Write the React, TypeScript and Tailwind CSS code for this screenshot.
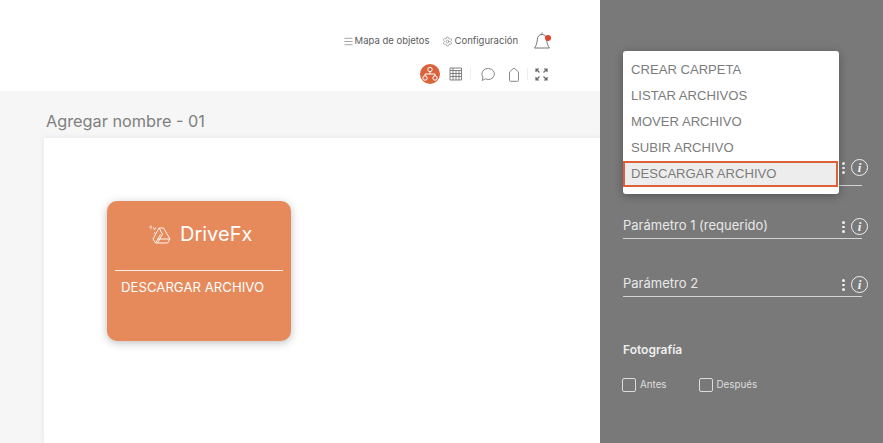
import { Menu, Settings } from "lucide-react";

const menuItems = ["CREAR CARPETA", "LISTAR ARCHIVOS", "MOVER ARCHIVO", "SUBIR ARCHIVO"];

const DriveIcon = () => (
  <svg width="24" height="20" viewBox="0 0 24 20" fill="none" stroke="#fff" strokeWidth="1" strokeLinejoin="round" className="opacity-90">
    <path d="M11 4h4.500l6.500 11-2.500 4H7.500L5 15z" />
    <path d="M11 4l3.500 6-5 9M9.500 15H22M7.500 19l5-8.500" />
    <path d="M1 3.500c1-1 2-1 3-.5M3 1.500v4M5 3l1.500 3 1.500-3M7 8l-1 2" strokeWidth="0.7" />
  </svg>
);

const FlowIcon = () => (
  <svg width="16" height="16" viewBox="0 0 16 16" fill="none" stroke="#fff" strokeWidth="1">
    <circle cx="8" cy="3.500" r="2.200" />
    <circle cx="3" cy="12" r="2.200" />
    <circle cx="13" cy="12" r="2.200" />
    <path d="M8 5.700V8M3 9.800V8h10v1.800" />
  </svg>
);

const TableIcon = () => (
  <svg width="14" height="14" viewBox="0 0 14 14" fill="none" stroke="#777" strokeWidth="0.9">
    <path d="M1 1h11.500v12H1zM1 3.500h11.500M1 6.500h11.500M1 9.500h11.500M4 1v12M7 3.500V13M10 3.500V13" />
  </svg>
);

const ChatIcon = () => (
  <svg width="16" height="15" viewBox="0 0 16 15" fill="none" stroke="#888" strokeWidth="1">
    <path d="M8.500 1.500a6 5.500 0 1 1-3 10.300L2.300 13.500l.6-3.400A6 5.500 0 0 1 8.500 1.500z" />
  </svg>
);

const TagIcon = () => (
  <svg width="12" height="15" viewBox="0 0 12 15" fill="none" stroke="#888" strokeWidth="1">
    <path d="M1.500 5L6 1l4.500 4v8.500a.8.8 0 0 1-.8.8H2.300a.8.8 0 0 1-.8-.8z" />
  </svg>
);

const ExpandIcon = () => (
  <svg width="13" height="13" viewBox="0 0 13 13" fill="none" stroke="#666" strokeWidth="1.200">
    <path d="M1 4V1h3M1 1l3.500 3.500M9 1h3v3M12 1L8.500 4.500M1 9v3h3M1 12l3.500-3.500M12 9v3H9M12 12L8.500 8.500" />
  </svg>
);

const BellIcon = () => (
  <div className="relative h-[18px] w-[18px]">
    <svg width="18" height="18" viewBox="0 0 18 18" fill="none" stroke="#777" strokeWidth="1" strokeLinejoin="round">
      <path d="M9 .5V2.500M9 2.500c-3 0-4.500 2-4.700 5.300-.2 3.200-1 6-2.800 8.200h15c-1.800-2.200-2.600-5-2.800-8.200-.2-3.300-1.700-5.300-4.700-5.300z" />
    </svg>
    <span className="absolute right-0 top-[3px] h-[6px] w-[6px] rounded-full bg-[#e0442f]" />
  </div>
);

const InfoIcon = () => (
  <div className="flex h-[17px] w-[17px] items-center justify-center rounded-full border-[1.500px] border-[#f1f1f1] font-['Liberation_Serif',serif] text-[13px] font-bold italic leading-none text-[#f1f1f1]">
    i
  </div>
);

const Dots = () => (
  <div className="flex flex-col gap-[2px]">
    <span className="h-[2.500px] w-[2.500px] rounded-full bg-[#f1f1f1]" />
    <span className="h-[2.500px] w-[2.500px] rounded-full bg-[#f1f1f1]" />
    <span className="h-[2.500px] w-[2.500px] rounded-full bg-[#f1f1f1]" />
  </div>
);

const ParamRow = ({ label, first, className }: { label: string; first?: boolean; className?: string }) => (
  <div className={`relative h-[24px] w-[239px] border-b-[1.500px] border-[#d4d4d4] ${className ?? ""}`}>
    <span className="block pt-[3px] text-[13px] leading-[14px] text-[#e8e8e8]">{label}</span>
    <div className={`absolute left-[219px] ${first ? "top-[0px]" : "top-[6px]"}`}>
      <Dots />
    </div>
    <div className={`absolute left-[228px] ${first ? "top-[-3px]" : "top-[3px]"}`}>
      <InfoIcon />
    </div>
  </div>
);

const CheckItem = ({ label }: { label: string }) => (
  <div className="flex items-center gap-[4px]">
    <span className="h-[14px] w-[14px] rounded-[2px] border border-[#dcdcdc]" />
    <span className="text-[9.800px] text-[#dedede]">{label}</span>
  </div>
);

export default function App() {
  return (
    <div className="flex h-[443px] w-[883px] overflow-hidden bg-white font-['Inter','Noto_Sans',sans-serif]">
      <div className="flex w-[600px] flex-col">
        <header className="flex h-[91px] flex-col items-end bg-white pr-[49px] pt-[31px]">
          <div className="flex h-[20px] items-center text-[9.500px] text-[#5c5c5c]">
            <Menu size={11} strokeWidth={1.2} className="mr-[1px]" />
            <span>Mapa de objetos</span>
            <Settings size={11} strokeWidth={1} className="ml-[12px] mr-[2px]" />
            <span>Configuración</span>
            <div className="ml-[15px]">
              <BellIcon />
            </div>
          </div>
          <div className="mr-[3px] mt-[12px] flex h-[22px] items-center">
            <div className="flex h-[20px] w-[20px] items-center justify-center rounded-full bg-[#d9633a]">
              <FlowIcon />
            </div>
            <div className="ml-[9px]">
              <TableIcon />
            </div>
            <div className="ml-[7px] h-[12px] w-px bg-[#eeeeee]" />
            <div className="ml-[9px]">
              <ChatIcon />
            </div>
            <div className="ml-[12px]">
              <TagIcon />
            </div>
            <div className="ml-[7px] h-[12px] w-px bg-[#eeeeee]" />
            <div className="ml-[7px]">
              <ExpandIcon />
            </div>
          </div>
        </header>
        <main className="flex flex-1 flex-col bg-[#f6f6f6] pl-[44px]">
          <h1 className="ml-[2px] mt-[19px] h-[28px] text-[16.300px] font-normal leading-[22px] text-[#808080]">
            Agregar nombre - 01
          </h1>
          <section className="flex-1 bg-white pl-[63px] pt-[63px] shadow-[0_0_6px_rgba(0,0,0,0.08)]">
            <div className="flex h-[140px] w-[184px] flex-col rounded-[10px] bg-[#e68a5b] shadow-[0_2px_8px_rgba(0,0,0,0.25)]">
              <div className="flex h-[69px] items-center pb-[3px] pl-[41px]">
                <DriveIcon />
                <span className="ml-[8px] text-[20px] leading-none text-white">DriveFx</span>
              </div>
              <div className="ml-[8px] mr-[8px] h-px bg-[#fdf0e8]" />
              <p className="ml-[14px] mt-[8px] text-[13.200px] leading-[17px] text-white">DESCARGAR ARCHIVO</p>
            </div>
          </section>
        </main>
      </div>

      <aside className="relative flex w-[283px] flex-col bg-[#797979] pl-[23px]">
        <ParamRow label="" first className="mt-[162px]" />
        <ParamRow label="Parámetro 1 (requerido)" className="mt-[29px]" />
        <ParamRow label="Parámetro 2" className="mt-[34px]" />
        <h2 className="mt-[45px] h-[16px] text-[12px] font-semibold leading-[16px] text-[#eeeeee]">Fotografía</h2>
        <div className="-ml-[1px] mt-[20px] flex gap-[32px]">
          <CheckItem label="Antes" />
          <CheckItem label="Después" />
        </div>

        <div className="absolute left-[23px] top-[51px] w-[216px] rounded-[3px] bg-white pb-[7px] pt-[6px] font-['Liberation_Sans',sans-serif] text-[13.100px] text-[#7c7c7c] shadow-[0_2px_10px_rgba(0,0,0,0.3)]">
          {menuItems.map((item) => (
            <div key={item} className="flex h-[26px] items-center pl-[8px]">
              {item}
            </div>
          ))}
          <div className="ml-0 mr-[1px] flex h-[26px] items-center border-2 border-[#dd6038] bg-[#ededed] pl-[6px]">
            DESCARGAR ARCHIVO
          </div>
        </div>
      </aside>
    </div>
  );
}
